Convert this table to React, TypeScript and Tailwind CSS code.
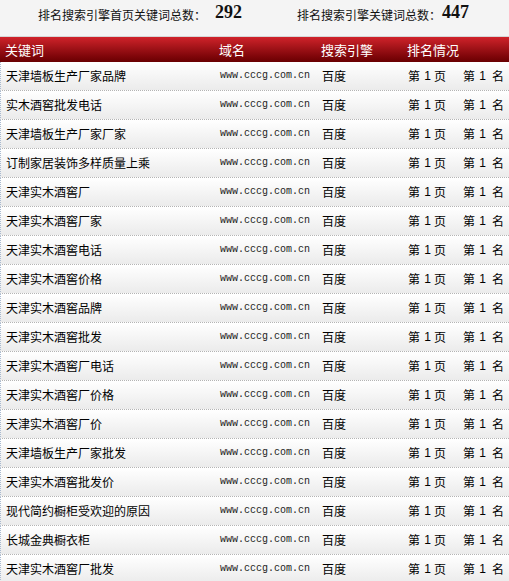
import React from "react";

const keywords = [
  "天津墙板生产厂家品牌",
  "实木酒窖批发电话",
  "天津墙板生产厂家厂家",
  "订制家居装饰多样质量上乘",
  "天津实木酒窖厂",
  "天津实木酒窖厂家",
  "天津实木酒窖电话",
  "天津实木酒窖价格",
  "天津实木酒窖品牌",
  "天津实木酒窖批发",
  "天津实木酒窖厂电话",
  "天津实木酒窖厂价格",
  "天津实木酒窖厂价",
  "天津墙板生产厂家批发",
  "天津实木酒窖批发价",
  "现代简约橱柜受欢迎的原因",
  "长城金典橱衣柜",
  "天津实木酒窖厂批发",
];

const cjk = { fontFamily: '"Noto Sans CJK SC", "Noto Sans", sans-serif' };

function Rank() {
  return (
    <div className="flex items-center text-[12px] leading-none" style={cjk}>
      <span className="w-[12px]">第</span>
      <span className="ml-[3px] w-[9px] text-center" style={{ fontFamily: '"Liberation Sans", sans-serif' }}>1</span>
      <span className="ml-[2px] w-[12px]">页</span>
      <span className="ml-[17px] w-[12px]">第</span>
      <span className="ml-[3px] w-[9px] text-center" style={{ fontFamily: '"Liberation Sans", sans-serif' }}>1</span>
      <span className="ml-[5px] w-[12px]">名</span>
    </div>
  );
}

export default function App() {
  return (
    <div className="w-[509px] h-[581px] overflow-hidden bg-[#f4f4f4] text-black">
      <div className="h-[36px] flex items-start text-[12px] leading-none text-[#111]" style={cjk}>
        <span className="ml-[38px] mt-[9px]">排名搜索引擎首页关键词总数：</span>
        <span
          className="ml-[9px] mt-[3px] text-[18px] font-bold leading-none"
          style={{ fontFamily: '"Liberation Serif", serif' }}
        >
          292
        </span>
        <span className="ml-[55px] mt-[9px]">排名搜索引擎关键词总数：</span>
        <span
          className="ml-[1px] mt-[3px] text-[18px] font-bold leading-none"
          style={{ fontFamily: '"Liberation Serif", serif' }}
        >
          447
        </span>
      </div>
      <div className="border-t border-[#d6d6d6]">
        <div
          className="h-[25px] grid grid-cols-[219px_102px_86px_1fr] items-center bg-gradient-to-b from-[#d0232a] to-[#690002] text-white text-[13px] leading-none"
          style={cjk}
        >
          <span className="pl-[5px]">关键词</span>
          <span>域名</span>
          <span>搜索引擎</span>
          <span>排名情况</span>
        </div>
        {keywords.map((k, i) => (
          <div
            key={i}
            className="h-[29px] grid grid-cols-[219px_102px_86px_1fr] items-center bg-gradient-to-b from-white to-[#ebebeb] border-b border-dotted border-b-[#b4b4b4] border-l border-l-[#a9bad0]"
          >
            <span className="pl-[5px] text-[12px] leading-none" style={cjk}>
              {k}
            </span>
            <span
              className="text-[10px] leading-none text-[#222]"
              style={{ fontFamily: '"Liberation Mono", monospace' }}
            >
              www.cccg.com.cn
            </span>
            <span className="text-[12px] leading-none" style={cjk}>
              百度
            </span>
            <Rank />
          </div>
        ))}
      </div>
    </div>
  );
}
